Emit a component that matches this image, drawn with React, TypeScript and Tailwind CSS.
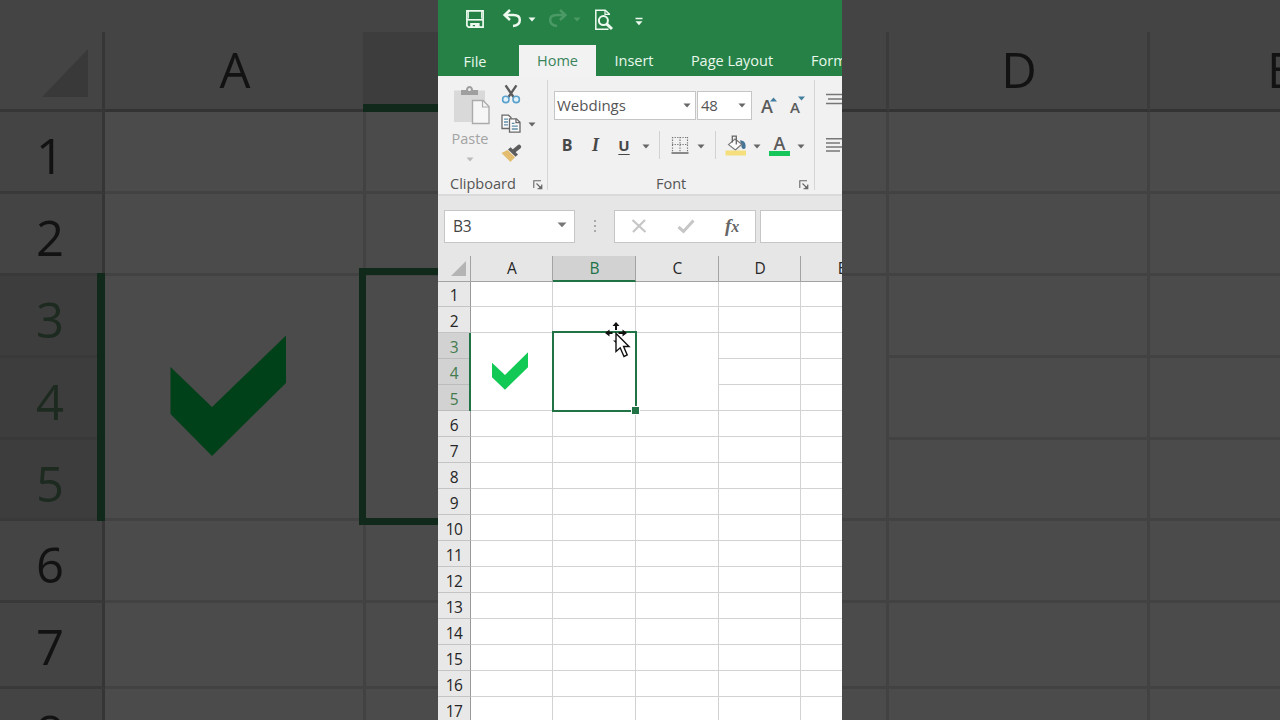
import React from 'react';

const ROWS = Array.from({ length: 17 }, (_, i) => i + 1);

const COLUMNS = [
  { name: 'A', width: 'w-[82px]', merged: true },
  { name: 'B', width: 'w-[83px]', merged: true },
  { name: 'C', width: 'w-[83px]', merged: true },
  { name: 'D', width: 'w-[82px]', merged: false },
  { name: 'E', width: 'w-[82px]', merged: false },
];

const BACKDROP_ROWS = [
  { n: 1, height: 'h-[82px]' },
  { n: 2, height: 'h-[82px]' },
  { n: 3, height: 'h-[82px]' },
  { n: 4, height: 'h-[82px]' },
  { n: 5, height: 'h-[81px]' },
  { n: 6, height: 'h-[82px]' },
  { n: 7, height: 'h-[86px]' },
  { n: 8, height: 'h-[82px]' },
];

const isSelectedRow = (n: number) => n >= 3 && n <= 5;

const Caret = ({ className = '' }: { className?: string }) => (
  <svg width="8" height="5" viewBox="0 0 8 5" className={`shrink-0 ${className}`}>
    <path d="M0.5 0.5H7.5L4 4.4Z" fill="currentColor" />
  </svg>
);

const Launcher = () => (
  <svg width="10" height="10" viewBox="0 0 10 10" fill="none" stroke="#666" strokeWidth="1.1">
    <path d="M0.8 8V0.8H8M3.5 3.5L8 8M8.8 4.5V8.8H4.5" />
    <path d="M8.8 5V8.8H5Z" fill="#666" stroke="none" />
  </svg>
);

const SaveIcon = () => (
  <svg width="20" height="20" viewBox="0 0 20 20" fill="none" stroke="#eefaf0" strokeWidth="1.7">
    <path d="M1.9 1.9H18.1V18.1H3.4L1.9 16.6Z" />
    <path d="M3.4 2V9.6M16.6 2V9.6" strokeWidth="1" />
    <path d="M2 10.8H18" strokeWidth="1.6" />
    <path d="M5.2 14H14.6V18.5H10V16H7.8V18.5H5.2Z" fill="#eefaf0" stroke="none" />
  </svg>
);

const UndoIcon = () => (
  <svg width="20" height="19" viewBox="0 0 20 19" fill="none" stroke="currentColor" strokeWidth="2.5">
    <path d="M8 1L2.6 6L8 11M2.8 6H11.4C15.6 6 17.8 8.2 17.8 11C17.8 14.4 15.2 16.6 11 17" />
  </svg>
);

const PreviewIcon = () => (
  <svg width="20" height="22" viewBox="0 0 20 22" fill="none" stroke="#eefaf0" strokeWidth="1.5">
    <path d="M15.3 6V5L11.2 1.2H1.8V20.2H14.5" />
    <path d="M11 1.2V5.4H15.3" strokeWidth="1.2" />
    <circle cx="9.4" cy="11.6" r="4.5" strokeWidth="2" />
    <path d="M12.6 14.8L18 20" strokeWidth="3" />
  </svg>
);

const PasteIcon = () => (
  <svg width="38" height="42" viewBox="0 0 38 42" fill="none">
    <path d="M1 5.5H32V37H1Z" fill="#d9d9d9" />
    <path d="M8 10V5H13C13 -0.5 20 -0.5 20 5H25V10Z" fill="#9f9f9f" />
    <circle cx="16.5" cy="4.5" r="1.5" fill="#efefef" />
    <path d="M19.5 15.5H30L36 21.5V38.5H19.5Z" fill="#f6f6f6" stroke="#ababab" strokeWidth="1.4" />
    <path d="M29.5 15.5V22H36" stroke="#ababab" strokeWidth="1.2" />
  </svg>
);

const ScissorsIcon = () => (
  <svg width="20" height="20" viewBox="0 0 20 20" fill="none">
    <path d="M4.6 1.4L12.6 13.2M15.4 1.4L7.4 13.2" stroke="#5b5b5b" strokeWidth="2.4" />
    <circle cx="4.8" cy="15.4" r="3.2" fill="#e2f1fa" stroke="#5aa2cd" strokeWidth="1.6" />
    <circle cx="15.2" cy="15.4" r="3.2" fill="#e2f1fa" stroke="#5aa2cd" strokeWidth="1.6" />
  </svg>
);

const CopyIcon = () => (
  <svg width="20" height="20" viewBox="0 0 20 20" strokeWidth="1.3">
    <path d="M1 1.2H7.5L10 3.6V14.5H1Z" fill="#fafafa" stroke="#696969" />
    <path d="M3 5.2H7M3 8H7M3 10.8H7" stroke="#5f8fa6" />
    <path d="M8.5 4.8H15.5L19 8.2V18.1H8.5Z" fill="#fafafa" stroke="#696969" />
    <path d="M15 4.8V8.7H19" fill="none" stroke="#696969" />
    <path d="M10.8 9.3H13.5M10.8 12.1H16.8M10.8 15H16.8" stroke="#5f8fa6" />
  </svg>
);

const BrushIcon = () => (
  <svg width="21" height="19" viewBox="0 0 21 19">
    <path d="M0.5 9L6.5 6L14 13.2L9.4 18Z" fill="#e3bd6d" />
    <path d="M7 5.6L9.6 3.2L17 10.4L14.6 12.8Z" fill="#5c5c5c" />
    <path d="M13.5 6.5L18 2.8" stroke="#5c5c5c" strokeWidth="4.2" strokeLinecap="round" />
  </svg>
);

const BordersIcon = () => (
  <svg width="18" height="19" viewBox="0 0 18 19" fill="none" stroke="#777">
    <path d="M1 1.5H17M1 8.5H17M1.5 1V16M9 1V16M16.5 1V16" strokeDasharray="1.3 1.3" strokeWidth="1.2" />
    <path d="M0.5 17H17.5" stroke="#666" strokeWidth="1.5" />
  </svg>
);

const BucketIcon = () => (
  <svg width="22" height="22" viewBox="0 0 22 22">
    <path d="M15 5.2C19.6 5.4 21 8.5 20.6 12.4C19 15.4 16 13.4 16.4 10.4Z" fill="#447597" />
    <path d="M3.5 9.6L10 4L16.8 9.2L10.4 15Z" fill="#fbfbfb" stroke="#777" strokeWidth="1.2" />
    <path d="M7.3 7.5V1.2H11.3V9.5" fill="none" stroke="#666" strokeWidth="1.3" />
    <path d="M0.5 15.5H21V20.5H0.5Z" fill="#f5df7c" />
  </svg>
);

const MoveCursor = () => (
  <svg width="28" height="38" viewBox="0 0 28 38">
    <path d="M12 1L15.5 5H13V9H11V5H8.5Z" fill="#111" />
    <path d="M1 12L5.5 8.5V11H8.5V13H5.5V15.5Z" fill="#111" />
    <path d="M23 12L18.5 8.5V11H14.5V13H18.5V15.5Z" fill="#111" />
    <path d="M9 19.5H12V22Z" fill="#111" />
    <path d="M12 12.5V30.5L16.2 26.8L20 35.5L23.2 34L19.6 25.5H25Z" fill="#fff" stroke="#111" strokeWidth="1.4" />
  </svg>
);

const TitleBar = () => (
  <div className="flex h-[45px] shrink-0 items-start text-[#eefaf0]">
    <div className="ml-[27px] mt-[9px]"><SaveIcon /></div>
    <div className="ml-[17px] mt-[9px]"><UndoIcon /></div>
    <Caret className="ml-1.5 mt-[17px]" />
    <div className="ml-3 mt-[9px] -scale-x-100 text-[#4b9a66]"><UndoIcon /></div>
    <Caret className="ml-[5px] mt-[17px] text-[#4b9a66]" />
    <div className="ml-[13px] mt-[9px]"><PreviewIcon /></div>
    <svg width="8" height="9" viewBox="0 0 8 9" className="ml-[21px] mt-[17px]">
      <path d="M0.5 0.8H7.5V2.2H0.5ZM0.5 4.3H7.5L4 8.3Z" fill="currentColor" />
    </svg>
  </div>
);

const Tabs = () => (
  <div className="flex h-[31px] shrink-0 overflow-hidden whitespace-nowrap text-[14.5px] leading-[31px] text-[#e8f8eb]">
    <div className="w-[74px] shrink-0 pt-px text-center">File</div>
    <div className="ml-[7px] w-[77px] shrink-0 bg-[#f2f2f2] text-center font-medium text-[#39845a]">Home</div>
    <div className="w-[76px] shrink-0 text-center">Insert</div>
    <div className="w-[120px] shrink-0 text-center">Page Layout</div>
    <div className="ml-[19px]">Formulas</div>
  </div>
);

const ClipboardGroup = () => (
  <div className="flex w-[110px] shrink-0 flex-col">
    <div className="flex h-[96px] shrink-0">
      <div className="ml-3 flex w-10 flex-col items-center pt-[9px] text-[#a3a3a3]">
        <div className="ml-1"><PasteIcon /></div>
        <span className="mt-[3px] text-[14.5px] leading-[18px]">Paste</span>
        <Caret className="mt-[9px] text-[#bbb]" />
      </div>
      <div className="ml-[11px] flex flex-col pt-2">
        <ScissorsIcon />
        <div className="mt-2.5 flex items-center">
          <CopyIcon />
          <Caret className="ml-[7px] mt-px text-[#666]" />
        </div>
        <div className="mt-2.5"><BrushIcon /></div>
      </div>
    </div>
    <div className="flex h-[26px] items-center text-[14.5px] leading-6">
      <span className="ml-3 w-[83px]">Clipboard</span>
      <div className="mt-0.5"><Launcher /></div>
    </div>
  </div>
);

const FontGroup = () => (
  <div className="flex w-[267px] shrink-0 flex-col pl-[6px]">
    <div className="mt-[15px] flex h-[29px] shrink-0 items-center">
      <div className="flex h-[29px] w-[142px] items-center justify-between border border-[#c5c5c5] bg-white pl-0.5 pr-1 text-[15px]">
        Webdings
        <Caret className="text-[#666]" />
      </div>
      <div className="ml-px flex h-[29px] w-[55px] items-center justify-between border border-[#c5c5c5] bg-white pl-[3px] pr-[5px] text-[15px]">
        <span className="tracking-[-0.4px]">48</span>
        <Caret className="text-[#666]" />
      </div>
      <div className="ml-[9px] flex items-start">
        <span className="text-[18px] font-semibold leading-7 text-[#5b5b5b]">A</span>
        <svg width="7" height="5" viewBox="0 0 7 5" className="-ml-[3px] mt-[5px]"><path d="M0 4.5H7L3.5 0.5Z" fill="#437d9f" /></svg>
      </div>
      <div className="ml-[13px] flex items-start">
        <span className="pt-0.5 text-[15px] font-semibold leading-7 text-[#5b5b5b]">A</span>
        <svg width="7" height="5" viewBox="0 0 7 5" className="-ml-0.5 mt-[5px]"><path d="M0 0.5H7L3.5 4.5Z" fill="#437d9f" /></svg>
      </div>
    </div>
    <div className="mt-[10px] flex h-[30px] shrink-0 items-center text-[#484848]">
      <span className="w-[26px] text-center text-[16px] font-bold">B</span>
      <span className="w-[31px] text-center font-['Liberation_Serif'] text-[18px] font-bold italic">I</span>
      <span className="w-[26px] text-center text-[15px] font-bold underline underline-offset-[3px]">U</span>
      <Caret className="ml-[5px] mt-0.5 text-[#666]" />
      <div className="ml-[9px] h-7 w-px bg-[#d2d2d2]" />
      <div className="ml-[11px]"><BordersIcon /></div>
      <Caret className="ml-2 mt-0.5 text-[#666]" />
      <div className="ml-[10px] h-7 w-px bg-[#d2d2d2]" />
      <div className="ml-[9px] mt-px"><BucketIcon /></div>
      <Caret className="ml-[6px] mt-0.5 text-[#666]" />
      <div className="ml-2 flex w-[21px] flex-col items-center">
        <span className="h-[15px] text-[18px] font-semibold leading-[17px] text-[#5b5b5b]">A</span>
        <div className="mt-px h-[5px] w-[21px] bg-[#16c65a]" />
      </div>
      <Caret className="ml-[7px] mt-0.5 text-[#666]" />
    </div>
    <div className="mt-3 flex h-[26px] items-center text-[14.5px] leading-6">
      <span className="ml-[102px] w-[143px]">Font</span>
      <div className="mt-0.5"><Launcher /></div>
    </div>
  </div>
);

const AlignGroup = () => (
  <svg width="30" height="110" viewBox="0 0 30 110" className="ml-[11px] shrink-0" stroke="#777" strokeWidth="1.4">
    <path d="M0 18.5H30M2 23H22M0 27.5H30" />
    <path d="M0 62.7H30M0 67H14M0 71H30M0 75H14" />
  </svg>
);

const Ribbon = () => (
  <div className="flex h-[120px] shrink-0 overflow-hidden border-b-2 border-[#dadada] bg-[#f1f1f1] text-[#555]">
    <ClipboardGroup />
    <div className="-ml-px mt-1 h-[110px] w-px shrink-0 bg-[#d5d5d5]" />
    <FontGroup />
    <div className="-ml-px mt-1 h-[110px] w-px shrink-0 bg-[#d5d5d5]" />
    <AlignGroup />
  </div>
);

const FormulaBar = () => (
  <div className="flex h-[60px] shrink-0 items-center overflow-hidden bg-[#e6e6e6]">
    <div className="ml-1.5 flex h-[33px] w-[131px] shrink-0 items-center justify-between border border-[#c6c6c6] bg-white pl-2 pr-[7px] text-[15.5px] text-[#444]">
      <span className="pt-0.5 tracking-tight">B3</span>
      <svg width="10" height="6" viewBox="0 0 10 6" className="-mt-0.5"><path d="M0.5 0.5H9.5L5 5.3Z" fill="#777" /></svg>
    </div>
    <div className="ml-[19px] flex shrink-0 flex-col gap-[3px]">
      <div className="size-0.5 bg-[#aaa]" />
      <div className="size-0.5 bg-[#aaa]" />
      <div className="size-0.5 bg-[#aaa]" />
    </div>
    <div className="ml-[18px] flex h-[33px] w-[142px] shrink-0 items-center border border-[#c6c6c6] bg-white">
      <svg width="16" height="14" viewBox="0 0 16 14" className="ml-4" stroke="#c6c6c6" strokeWidth="2.2">
        <path d="M1.5 1L14.5 13M14 1L2 13" />
      </svg>
      <svg width="18" height="15" viewBox="0 0 18 15" className="ml-[30px]" fill="none" stroke="#c6c6c6" strokeWidth="3">
        <path d="M1.5 8L6.5 12.4L16.5 1.5" />
      </svg>
      <span className="-mt-0.5 ml-[30px] font-['Liberation_Serif'] text-[19px] font-bold italic leading-none text-[#666]">
        f<span className="text-[16px]">x</span>
      </span>
    </div>
    <div className="ml-1 h-[33px] w-[100px] shrink-0 border border-[#c6c6c6] bg-white" />
  </div>
);

const Sheet = () => (
  <div className="relative flex min-h-0 flex-1 flex-col overflow-hidden bg-white text-[15.5px] text-[#252525]">
    <div className="flex h-[26px] shrink-0 bg-[#e6e6e6]">
      <div className="flex w-[33px] shrink-0 items-end justify-end border-b border-r border-[#a3a3a3] pb-[5px] pr-1">
        <svg width="15" height="15" viewBox="0 0 15 15"><path d="M15 0V15H0Z" fill="#b4b4b4" /></svg>
      </div>
      {COLUMNS.map(({ name, width }) => (
        <div
          key={name}
          className={`${width} shrink-0 border-r pl-px text-center leading-[25px] ${
            name === 'B'
              ? 'border-b-2 border-b-[#217346] border-r-[#a3a3a3] bg-[#d2d2d2] text-[#217346]'
              : 'border-b border-[#a3a3a3]'
          }`}
        >
          {name}
        </div>
      ))}
    </div>
    {ROWS.map((n) => (
      <div key={n} className={`flex shrink-0 ${n === 1 ? 'h-[25px]' : 'h-[26px]'}`}>
        <div
          className={`w-[33px] shrink-0 border-b border-r border-r-[#999] text-center tracking-[-0.5px] ${
            n === 1 ? 'leading-[27px]' : 'leading-[29px]'
          } ${
            isSelectedRow(n) ? 'border-b-[#bcbcbc] bg-[#d2d2d2] text-[#437a4e]' : 'border-b-[#c4c4c4] bg-[#e8e8e8]'
          }`}
        >
          {n}
        </div>
        {COLUMNS.map(({ name, width, merged }) => (
          <div
            key={name}
            className={`${width} shrink-0 border-r border-[#d2d2d2] ${merged && (n === 3 || n === 4) ? '' : 'border-b'}`}
          />
        ))}
      </div>
    ))}

    {/* check mark of the merged A3:A5 cell */}
    <svg width="36" height="38" viewBox="0 0 36 38" className="absolute left-[54px] top-[96px]">
      <path d="M0 10.7L13 23L36 0.3V15.3L13 37.7L0 25.3Z" fill="#12c956" />
    </svg>

    {/* active cell outline, fill handle and pointer */}
    <div className="absolute left-[31px] top-[77px] h-[78px] w-0.5 bg-[#217346]" />
    <div className="absolute left-[114px] top-[75px] h-[81px] w-[85px] border-2 border-[#217346]">
      <div className="absolute -bottom-[5px] -right-[5px] size-[9px] border border-white bg-[#217346]" />
    </div>
    <div className="absolute left-[166px] top-[65px]"><MoveCursor /></div>
  </div>
);

interface BackdropColumn {
  name: string;
  width: string;
  merged: boolean;
  selected?: boolean;
}

const BackdropGrid = ({ columns, rowHeaders }: { columns: BackdropColumn[]; rowHeaders?: boolean }) => (
  <div className="relative flex h-full w-[438px] shrink-0 flex-col overflow-hidden bg-[#444] text-[49px] text-[#121212]">
    <div className="flex h-28 shrink-0 pt-8">
      {rowHeaders && (
        <div className="flex w-[105px] shrink-0 items-end justify-end border-b-[3px] border-r-[3px] border-[#363636] pb-3 pr-3.5">
          <svg width="46" height="48" viewBox="0 0 46 48"><path d="M46 0V48H0Z" fill="#393939" /></svg>
        </div>
      )}
      {columns.map(({ name, width, selected }) => (
        <div
          key={name}
          className={`${width} shrink-0 text-center leading-[74px] ${
            selected
              ? '-ml-[3px] border-b-8 border-[#10291a] bg-[#3d3d3d]'
              : 'border-b-[3px] border-r-[3px] border-b-[#333] border-r-[#3b3b3b] pl-0.5'
          }`}
        >
          {selected ? '' : name}
        </div>
      ))}
    </div>
    {BACKDROP_ROWS.map(({ n, height }) => (
      <div key={n} className={`flex shrink-0 ${height}`}>
        {rowHeaders && (
          <div
            className={`w-[105px] shrink-0 border-b-[3px] border-r-[3px] border-b-[#393939] border-r-[#353535] pr-0.5 text-center leading-[86px] ${
              isSelectedRow(n) ? 'bg-[#3d3d3d] text-[#1d2a20]' : ''
            }`}
          >
            {n}
          </div>
        )}
        {columns.map(({ name, width, merged }) => (
          <div
            key={name}
            className={`${width} shrink-0 border-r-[3px] border-[#424242] bg-[#4b4b4b] ${
              merged && (n === 3 || n === 4) ? '' : 'border-b-[3px]'
            }`}
          />
        ))}
      </div>
    ))}
    {rowHeaders && (
      <>
        <svg width="116" height="121" viewBox="0 0 116 121" className="absolute left-[170px] top-[335px]">
          <path d="M0.5 32L42 72L116 0.5V48L42 121L0.5 79Z" fill="#004119" />
        </svg>
        <div className="absolute left-[97px] top-[273px] h-[248px] w-2 bg-[#10291a]" />
        <div className="absolute left-[359px] top-[268px] h-[257px] w-[100px] border-[7px] border-[#10291a]" />
      </>
    )}
  </div>
);

const LEFT_COLUMNS: BackdropColumn[] = [
  { name: 'A', width: 'w-[261px]', merged: true },
  { name: 'B', width: 'w-[261px]', merged: true, selected: true },
];

const RIGHT_COLUMNS: BackdropColumn[] = [
  { name: '', width: 'w-[47px]', merged: true },
  { name: 'D', width: 'w-[261px]', merged: false },
  { name: 'E', width: 'w-[262px]', merged: false },
];

const App: React.FC = () => {
  return (
    <div className="flex h-[720px] w-[1280px] overflow-hidden font-['Open_Sans',sans-serif]">
      <BackdropGrid columns={LEFT_COLUMNS} rowHeaders />
      <main className="flex h-full w-[404px] shrink-0 flex-col overflow-hidden bg-[#268147]">
        <TitleBar />
        <Tabs />
        <Ribbon />
        <FormulaBar />
        <Sheet />
      </main>
      <BackdropGrid columns={RIGHT_COLUMNS} />
    </div>
  );
};

export default App;
